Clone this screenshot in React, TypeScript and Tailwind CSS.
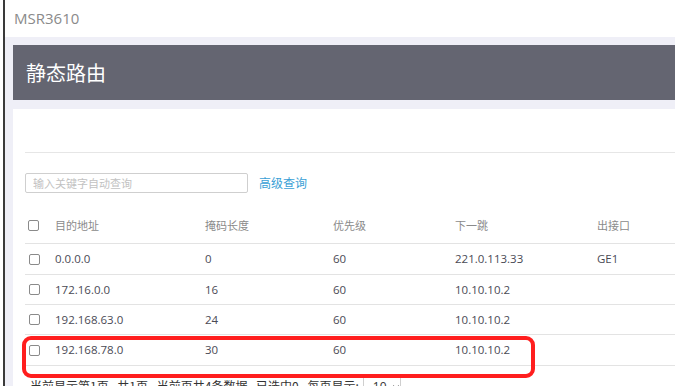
import React from "react";

const rows = [
  { dst: "0.0.0.0", mask: "0", pri: "60", next: "221.0.113.33", out: "GE1", h: "h-[31px]" },
  { dst: "172.16.0.0", mask: "16", pri: "60", next: "10.10.10.2", out: "", h: "h-[30px]" },
  { dst: "192.168.63.0", mask: "24", pri: "60", next: "10.10.10.2", out: "", h: "h-[30px]" },
  { dst: "192.168.78.0", mask: "30", pri: "60", next: "10.10.10.2", out: "", h: "h-[31px]" },
];

const cjk = { fontFamily: '"Noto Sans CJK SC", "Noto Sans", sans-serif' };
const num = { fontFamily: '"Open Sans", "Noto Sans CJK SC", sans-serif' };

function Box() {
  return <div className="w-[11px] h-[11px] border border-[#8a8a8a] rounded-[2px] bg-white" />;
}

export default function App() {
  return (
    <div className="relative w-[689px] h-[386px] overflow-hidden bg-white flex">
      <div className="w-[3px] shrink-0 bg-white" />
      <div className="w-[2px] shrink-0 bg-[#3a3a3a]" />
      <div className="flex-1 flex flex-col">
        <div className="h-[37px] shrink-0 flex items-center pl-[9px] text-[15px] text-[#8a8a8a]" style={num}>
          MSR3610
        </div>
        <div className="flex shrink-0">
          <div className="w-[670px] shrink-0 bg-[#efeff7] pl-[8px] pt-[8px] flex flex-col">
            <div className="h-[55px] shrink-0 bg-[#646571] flex items-center pl-[13px] text-white text-[20px]" style={cjk}>
              静态路由
            </div>
            <div className="h-[9px] shrink-0" />
            <div className="bg-white pl-[12px] flex flex-col shrink-0">
              <div className="h-[44px] shrink-0 border-b border-[#e6e6e6]" />
              <div className="h-[20px] shrink-0" />
              <div className="flex items-center h-[20px] shrink-0">
                <div className="w-[223px] h-[20px] border border-[#cfcfcf] rounded-[2px] flex items-center pl-[7px] text-[11px] text-[#c2c2c2]" style={cjk}>
                  输入关键字自动查询
                </div>
                <div className="ml-[11px] text-[12px] text-[#3a9fd6]" style={cjk}>高级查询</div>
              </div>
              <div className="h-[15px] shrink-0" />
              <div className="grid shrink-0 grid-cols-[30px_150px_128px_122px_142px_1fr] items-center h-[36px] border-b border-[#e3e3e3] text-[11px] text-[#8a8a8a]" style={cjk}>
                <div className="pl-[3px]"><Box /></div>
                <div>目的地址</div>
                <div>掩码长度</div>
                <div>优先级</div>
                <div>下一跳</div>
                <div>出接口</div>
              </div>
              {rows.map((r) => (
                <div
                  key={r.dst}
                  className={`grid shrink-0 grid-cols-[30px_150px_128px_122px_142px_1fr] items-center ${r.h} border-b border-[#e3e3e3] text-[11.5px] text-[#4a4a55]`}
                  style={num}
                >
                  <div className="pl-[4px]"><Box /></div>
                  <div>{r.dst}</div>
                  <div>{r.mask}</div>
                  <div>{r.pri}</div>
                  <div>{r.next}</div>
                  <div>{r.out}</div>
                </div>
              ))}
              <div className="flex shrink-0 items-start mt-[11px] pl-[5px] text-[12px] leading-[16px] text-[#333]" style={cjk}>
                <span className="pt-[1px] whitespace-pre">当前显示第1页,  共1页,  当前页共4条数据,  已选中0,  每页显示:</span>
                <div className="ml-[4px] border-l border-r border-t border-[#cfcfcf] w-[38px] h-[22px] flex items-start pt-[1px] pl-[9px] gap-[5px]" style={num}>
                  <span>10</span>
                  <svg width="8" height="8" viewBox="0 0 8 8" className="mt-[5px]">
                    <path d="M1 2 L4 5 L7 2" stroke="#333" strokeWidth="1.8" fill="none" />
                  </svg>
                </div>
              </div>
            </div>
          </div>
          <div className="flex-1 bg-white" />
        </div>
      </div>
      <div className="absolute left-[22px] top-[336px] w-[513px] h-[42px] border-[4px] border-[#ff1e1e] rounded-[9px]" />
    </div>
  );
}
